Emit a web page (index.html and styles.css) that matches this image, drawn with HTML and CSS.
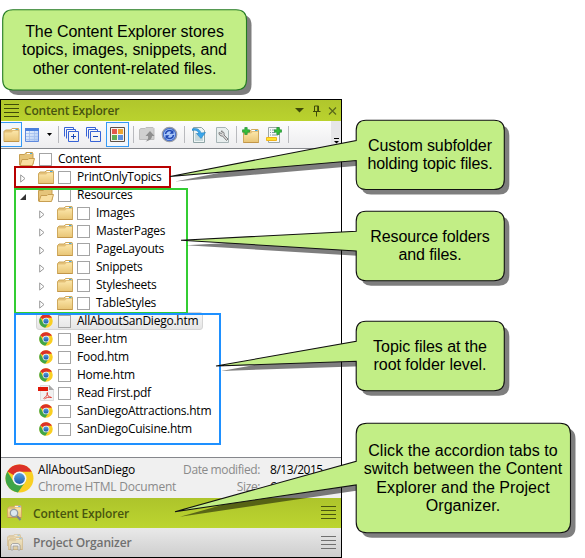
FILE: index.html
```
<!DOCTYPE html>
<html lang="en">
<head>
<meta charset="utf-8">
<title>Content Explorer</title>
<link rel="stylesheet" href="styles.css">
</head>
<body>
<svg class="defs" width="0" height="0" aria-hidden="true">
  <defs>
    <linearGradient id="gold" x1="0" y1="0" x2="0" y2="1"><stop offset="0" stop-color="#fbe5a8"/><stop offset="1" stop-color="#e9c677"/></linearGradient>
    <linearGradient id="blue" x1="0" y1="0" x2="0" y2="1"><stop offset="0" stop-color="#5aa0e0"/><stop offset="1" stop-color="#1c5cab"/></linearGradient>
    <linearGradient id="cells" x1="0" y1="0" x2="1" y2="1"><stop offset="0" stop-color="#f4f9ff"/><stop offset="1" stop-color="#a9c6f2"/></linearGradient>
    <symbol id="folder" viewBox="0 0 16 14">
      <path d="M.5 13.500V3.500L2 2h5l1.500-1.500H15L15.500 2v11.500z" fill="#e3c078" stroke="#cfa95c"/>
      <path d="M8.500 1.500h6" stroke="#fff"/><path d="M12 1.500h2.500" stroke="#45a8dc"/>
      <path d="M1 4.500h7L9.500 3H15v10H1z" fill="url(#gold)"/>
      <path d="M.5 13.500h15" stroke="#c29649"/>
    </symbol>
    <symbol id="folder-open" viewBox="0 0 16 14">
      <path d="M.5 13V2.500h5L7 .5h6.500L14 2v10z" fill="#e5c479" stroke="#c69e50"/>
      <path d="M8 1.500h5" stroke="#fff"/><path d="M11 1.500h2" stroke="#45a8dc"/>
      <path d="M1 13.500L3 7.500H9L10 6.500h5.500l-2 7z" fill="#f9dfa0" stroke="#c89f51"/>
    </symbol>
    <symbol id="chrome" viewBox="0 0 28 28">
      <circle cx="14" cy="14" r="13.500" fill="#f9cf22"/>
      <path d="M14 14L2.300 7.200A13.500 13.500 0 0 1 25.800 7.500H14z" fill="#dc3128"/>
      <path d="M2.300 7.200A13.500 13.500 0 0 0 12.500 27.400L19.700 17.200 14 14 8.300 17.200z" fill="#3fa548"/>
      <circle cx="14" cy="14" r="6.700" fill="#f3f6f8"/>
      <circle cx="14" cy="14" r="5.200" fill="url(#blue)"/>
    </symbol>
    <symbol id="pdf" viewBox="0 0 16 16">
      <path d="M2.500 .5h9l4 4v11h-13z" fill="#f1f1f1" stroke="#ddd"/><path d="M11 0l5 5h-5z" fill="#aaa"/>
      <path d="M0 2h10v4H0z" fill="#e01808"/>
      <path d="M5.500 13.500c2.500-1.500 4.200-3.500 3.800-6-.5 2.500 1 4.500 4.200 5-3-.6-5.500 0-7 1.500" fill="none" stroke="#e0362c" stroke-width=".9"/>
    </symbol>
    <symbol id="closed" viewBox="0 0 6 9"><path d="M.7 .9v7.200L5 4.500z" fill="#fff" stroke="#999"/></symbol>
    <symbol id="opened" viewBox="0 0 6 6"><path d="M6 0v6H0z" fill="#333"/></symbol>
    <symbol id="plus" viewBox="0 0 8 8"><path d="M2.800 .5h2.400v2.300h2.300v2.400H5.200v2.300H2.800V5.200H.5V2.800h2.300z" fill="#35c03b" stroke="#16852a" stroke-width=".6"/></symbol>
    <symbol id="lines" viewBox="0 0 15 14"><path d="M0 .5h15M0 4.500h15M0 8.500h15M0 12.500h15" stroke="currentColor"/></symbol>
  </defs>
</svg>

<main class="panel">
  <header class="title">
    <svg class="grip" width="15" height="14"><use href="#lines"/></svg>
    <h1>Content Explorer</h1>
    <svg class="winbtns" width="42" height="12" viewBox="0 0 42 12">
      <path d="M0 3h9L4.500 7.500z" fill="#3e4a08"/>
      <path d="M19.500 6.500v-5.500h4v5.500M18 6.500h7.500M21.500 7v4.500M22.700 1v5" fill="none" stroke="#3e4a08"/>
      <path d="M34 2.500l7 7M41 2.500l-7 7" stroke="#59671a" stroke-width="1.200"/>
    </svg>
  </header>

  <nav class="toolbar">
    <span class="tool first on"><svg width="17" height="14"><use href="#folder"/></svg></span>
    <span class="tool"><svg width="14" height="14" viewBox="0 0 14 14"><path d="M.5 .5h13v13H.5z" fill="url(#cells)" stroke="#5f8ade"/><path d="M0 0h14v3H0z" fill="#4b7fdc"/><path d="M1 5.500h12M1 8.500h12M1 11.500h12M4.500 3v10M9.500 3v10" stroke="#a3bfee" stroke-width=".8"/></svg></span>
    <span class="tool"><svg width="5" height="3"><path d="M0 0h5L2.500 3z"/></svg></span>
    <i class="sep"></i>
    <span class="tool"><svg width="15" height="15" viewBox="0 0 15 15"><path d="M.5 9.500v-9h9v2M2.500 11.500v-9h9v2M4.500 4.500h10v10h-10z" fill="none" stroke="#3763d6"/><path d="M7 9.500h5M9.500 7v5" stroke="#1846b5"/></svg></span>
    <span class="tool"><svg width="15" height="15" viewBox="0 0 15 15"><path d="M.5 9.500v-9h9v2M2.500 11.500v-9h9v2M4.500 4.500h10v10h-10z" fill="none" stroke="#3763d6"/><path d="M7 9.500h5" stroke="#1846b5"/></svg></span>
    <span class="tool on"><svg width="15" height="15" viewBox="0 0 15 15"><path d="M.5 .5h14v14H.5z" fill="#f6f3ee" stroke="#5d5048"/><path d="M2 2h5v5H2z" fill="#e4574c"/><path d="M8 2h5v5H8z" fill="#eda531"/><path d="M2 8h5v5H2z" fill="#62ad55"/><path d="M8 8h5v5H8z" fill="#5c8fe0"/></svg></span>
    <i class="sep"></i>
    <span class="tool"><svg width="16" height="15" viewBox="0 0 16 15"><path d="M.5 12.500v-10L2 1.500h4l1-1h7l1 1v11z" fill="#d0d0d0" stroke="#bdbdbd"/><path d="M11 4l4.500 5H13c0 3-3 5-6.500 5.500C9 13 9.500 11 9 9H6.500z" fill="#8e8e8e"/></svg></span>
    <span class="tool"><svg width="17" height="17" viewBox="0 0 17 17"><circle cx="8.500" cy="8.500" r="7.200" fill="#3f6cd0" stroke="#9a9da6" stroke-width="1.300"/><circle cx="8.500" cy="8.500" r="5.600" fill="#a9c6f7"/><path d="M4.500 8c.3-3.500 4.500-4.500 6.500-2.500M12.500 9c-.3 3.500-4.500 4.500-6.500 2.500" fill="none" stroke="#1f48b4" stroke-width="1.600"/><path d="M12.500 3.500v4.300H8.500zM4.500 13.500V9.200h4z" fill="#1f48b4"/></svg></span>
    <i class="sep"></i>
    <span class="tool"><svg width="14" height="16" viewBox="0 0 14 16"><path d="M1.500 .5h8l3 3v12h-11z" fill="#eef4f4" stroke="#8fa4a6"/><path d="M3 7h4M3 9h4M3 11h8M3 13h8" stroke="#9dbbc0"/><path d="M0 2c5-1.500 8 .5 9 4l4.500-.5-4.500 6L4.500 6.500H7C6 4 4 2.500 0 3.500z" fill="#3ba6ea" stroke="#1678bd" stroke-width=".5"/></svg></span>
    <span class="tool"><svg width="13" height="16" viewBox="0 0 13 16"><path d="M.5 .5h9l3 3v12H.5z" fill="#e8eeee" stroke="#a7b4b6"/><path d="M3 5.500A3 3 0 0 0 6.500 9l4 4.500 1.500-1.500-4-4A3 3 0 0 0 5 4l1.300 1.600-.8.900z" fill="#d5d5d5" stroke="#777" stroke-width=".9"/></svg></span>
    <i class="sep"></i>
    <span class="tool"><svg width="17" height="16" viewBox="0 0 17 16"><use href="#folder" x="1" y="2" width="16" height="14"/><use href="#plus" width="8" height="8"/></svg></span>
    <span class="tool"><svg width="16" height="16" viewBox="0 0 16 16"><path d="M2.500 .5h11v15h-11z" fill="#f8f9f8" stroke="#9da8a6"/><path d="M4 3h1M6 3h3M4 5.500h1M6 5.500h3M4 8h1M6 8h6" stroke="#8199a0"/><path d="M.5 10.500h10v3H.5z" fill="#ffe52c" stroke="#f0b41c"/><use href="#plus" x="8" width="8" height="8"/></svg></span>
    <i class="sep"></i>
    <span></span>
    <span class="more"><svg width="5" height="6"><path d="M0 0h5v1H0zM0 3h5L2.500 5.500z"/></svg></span>
  </nav>

  <section class="tree">
    <div class="row l0"><span class="exp"></span><svg class="ico"><use href="#folder-open"/></svg><i class="check"></i><span>Content</span></div>
    <div class="row l1"><span class="exp"><svg width="6" height="9"><use href="#closed"/></svg></span><svg class="ico"><use href="#folder"/></svg><i class="check"></i><span>PrintOnlyTopics</span></div>
    <div class="row l1"><span class="exp"><svg width="6" height="6"><use href="#opened"/></svg></span><svg class="ico"><use href="#folder-open"/></svg><i class="check"></i><span>Resources</span></div>
    <div class="row l2"><span class="exp"><svg width="6" height="9"><use href="#closed"/></svg></span><svg class="ico"><use href="#folder"/></svg><i class="check"></i><span>Images</span></div>
    <div class="row l2"><span class="exp"><svg width="6" height="9"><use href="#closed"/></svg></span><svg class="ico"><use href="#folder"/></svg><i class="check"></i><span>MasterPages</span></div>
    <div class="row l2"><span class="exp"><svg width="6" height="9"><use href="#closed"/></svg></span><svg class="ico"><use href="#folder"/></svg><i class="check"></i><span>PageLayouts</span></div>
    <div class="row l2"><span class="exp"><svg width="6" height="9"><use href="#closed"/></svg></span><svg class="ico"><use href="#folder"/></svg><i class="check"></i><span>Snippets</span></div>
    <div class="row l2"><span class="exp"><svg width="6" height="9"><use href="#closed"/></svg></span><svg class="ico"><use href="#folder"/></svg><i class="check"></i><span>Stylesheets</span></div>
    <div class="row l2"><span class="exp"><svg width="6" height="9"><use href="#closed"/></svg></span><svg class="ico"><use href="#folder"/></svg><i class="check"></i><span>TableStyles</span></div>
    <div class="row l1"><span class="exp"></span><div class="selected"><svg class="ico file"><use href="#chrome"/></svg><i class="check"></i><span>AllAboutSanDiego.htm</span></div></div>
    <div class="row l1"><span class="exp"></span><svg class="ico file"><use href="#chrome"/></svg><i class="check"></i><span>Beer.htm</span></div>
    <div class="row l1"><span class="exp"></span><svg class="ico file"><use href="#chrome"/></svg><i class="check"></i><span>Food.htm</span></div>
    <div class="row l1"><span class="exp"></span><svg class="ico file"><use href="#chrome"/></svg><i class="check"></i><span>Home.htm</span></div>
    <div class="row l1"><span class="exp"></span><svg class="ico pdf"><use href="#pdf"/></svg><i class="check"></i><span>Read First.pdf</span></div>
    <div class="row l1"><span class="exp"></span><svg class="ico file"><use href="#chrome"/></svg><i class="check"></i><span>SanDiegoAttractions.htm</span></div>
    <div class="row l1"><span class="exp"></span><svg class="ico file"><use href="#chrome"/></svg><i class="check"></i><span>SanDiegoCuisine.htm</span></div>
  </section>

  <section class="details">
    <svg width="29" height="29"><use href="#chrome"/></svg>
    <div class="who"><b>AllAboutSanDiego</b><span>Chrome HTML Document</span></div>
    <div class="keys"><span>Date modified:</span><span>Size:</span></div>
    <div class="vals"><span>8/13/2015</span><span>6</span></div>
  </section>

  <div class="tab active">
    <svg width="16" height="17" viewBox="0 0 16 17"><use href="#folder" width="15" height="13"/><circle cx="7" cy="8" r="3.700" fill="#dce8f0" stroke="#909aa5" stroke-width="1.300"/><path d="M10 11l3.500 4" stroke="#79808c" stroke-width="2"/></svg>
    <span>Content Explorer</span>
    <svg class="menu" width="15" height="14"><use href="#lines"/></svg>
  </div>
  <div class="tab idle">
    <svg width="16" height="17" viewBox="0 0 16 17"><g opacity=".55"><use href="#folder" width="14" height="12"/><use href="#folder" x="1" y="3" width="15" height="13"/></g><path d="M4 16v-5l1.500-1.500h5.500l2 1.500v5h-2v-4H6v4z" fill="#eee" stroke="#999" stroke-width=".8"/></svg>
    <span>Project Organizer</span>
    <svg class="menu" width="15" height="14"><use href="#lines"/></svg>
  </div>
</main>

<div class="mark red"></div>
<div class="mark green"></div>
<div class="mark blue"></div>

<svg class="balloons" width="585" height="558" viewBox="0 0 585 558">
  <defs>
    <path id="b1" d="M13 9.800H236Q246.500 9.800 246.500 20.300V79.500Q246.500 90 236 90H13Q2.700 90 2.700 79.500V20.300Q2.700 9.800 13 9.800Z"/>
    <path id="b2" d="M366 120.300H494Q504.300 120.300 504.300 130.500V179.500Q504.300 189.500 494 189.500H366Q356.200 189.500 356.200 179.500V160.500L170 176.500 356.200 140.500V130.500Q356.200 120.300 366 120.300Z"/>
    <path id="b3" d="M366 211.300H494Q504.300 211.300 504.300 221.500V270.500Q504.300 280.700 494 280.700H366Q356.200 280.700 356.200 270.500V251L181 240.200 356.200 231.200V221.500Q356.200 211.300 366 211.300Z"/>
    <path id="b4" d="M366 321.300H494Q504.300 321.300 504.300 331.500V380.500Q504.300 390.700 494 390.700H366Q356.200 390.700 356.200 380.500V361.200L216 366 356.200 341.300V331.500Q356.200 321.300 366 321.300Z"/>
    <path id="b5" d="M367 423.300H560Q570.500 423.300 570.500 434V522Q570.500 532.700 560 532.700H367Q356.200 532.700 356.200 522V485L175 511.700 356.200 461.300V434Q356.200 423.300 367 423.300Z"/>
  </defs>
  <g fill="#000" opacity=".5" transform="translate(5 5)"><use href="#b1"/><use href="#b2"/><use href="#b3"/><use href="#b4"/><use href="#b5"/></g>
  <g fill="#c2ee86" stroke="#111" stroke-width="1.100"><use href="#b1" stroke="#237a23"/><use href="#b2"/><use href="#b3"/><use href="#b4"/><use href="#b5"/></g>
</svg>

<p class="note n1">The Content Explorer stores<br>topics, images, snippets, and<br>other content-related files.</p>
<p class="note n2">Custom subfolder<br>holding topic files.</p>
<p class="note n3">Resource folders<br>and files.</p>
<p class="note n4">Topic files at the<br>root folder level.</p>
<p class="note n5">Click the accordion tabs to<br>switch between the Content<br>Explorer and the Project<br>Organizer.</p>
</body>
</html>
```
FILE: styles.css
```
* { box-sizing: border-box; }
body {
  margin: 0;
  padding-top: 99px;
  width: 585px;
  height: 558px;
  overflow: hidden;
  position: relative;
  background: #fff;
  font: 12px/18px "Open Sans", "Noto Sans", sans-serif;
  color: #000;
}
svg { display: block; flex: none; }
.defs { position: absolute; }

.panel {
  width: 342px;
  height: 459px;
  border: 1px solid #000;
  display: flex;
  flex-direction: column;
  background: #fff;
}
.title {
  height: 21px;
  flex: none;
  display: flex;
  align-items: center;
  padding: 0 4px 0 3px;
  background: linear-gradient(#b0c62c, #bad22e);
  color: #3e4a08;
}
.title h1 {
  margin: 0 auto 0 5px;
  font-size: 12px;
  font-weight: 600;
  letter-spacing: -.2px;
  color: #48550f;
}

.toolbar {
  height: 28px;
  flex: none;
  display: grid;
  grid-template-columns: 21px 20px 14px 5px 21px 23px 25px 7px 19px 26px 5px 24px 22px 6px 23px 23px 6px 1fr 10px;
  background: linear-gradient(#fdfdfd, #ededef);
  border-bottom: 1px solid #85878c;
}
.tool { display: flex; align-items: center; justify-content: center; }
.tool.on { border: 1px solid #3399f5; background: #f1f6fc; margin: 1px; height: 25px; }
.tool.first { margin-left: 0; margin-right: 0; border-left: 0; }
.sep { width: 1px; height: 17px; background: #b9babe; place-self: center; }
.more { display: flex; align-items: flex-end; justify-content: center; padding-bottom: 4px; background: #e6e6e8; }

.tree { height: 308px; flex: none; padding-top: 1px; }
.row { height: 18px; display: flex; align-items: center; white-space: nowrap; }
.row > span, .selected > span { letter-spacing: -.24px; }
.l1 { padding-left: 19px; }
.l2 { padding-left: 38px; }
.exp { width: 18px; height: 18px; flex: none; display: flex; align-items: center; padding-top: 3px; }
.ico { width: 16px; height: 14px; margin-right: 4px; }
.file { width: 14px; height: 14px; margin-left: 1px; margin-right: 5px; }
.pdf { height: 16px; }
.check { width: 13px; height: 13px; flex: none; border: 1px solid #a4a4a4; margin: 1px 6px 0 0; }
.selected {
  display: flex;
  align-items: center;
  height: 18px;
  width: 167px;
  margin-left: -2px;
  padding-left: 1px;
  border: 1px solid #d5d5d5;
  border-radius: 3px;
  background: linear-gradient(#f8f8f8, #e5e5e5);
}

.details {
  height: 41px;
  flex: none;
  display: flex;
  align-items: center;
  border-top: 1px solid #85878c;
  background: #f0f0f0;
  padding-left: 4px;
  color: #8a8a8a;
  line-height: 17px;
  white-space: nowrap;
}
.details > div { display: flex; flex-direction: column; margin-top: -1px; }
.who { margin-left: 4px; width: 145px; letter-spacing: -.2px; }
.who b, .vals { color: #000; font-weight: 400; }
.keys { width: 77px; align-items: flex-end; letter-spacing: -.4px; }
.vals { margin-left: 10px; letter-spacing: -.45px; }

.tab {
  height: 30px;
  flex: none;
  display: flex;
  align-items: center;
  padding: 0 5px 0 6px;
  font-weight: 600;
  letter-spacing: -.15px;
}
.tab span { margin: 0 auto 0 10px; padding-top: 1px; }
.active { background: linear-gradient(#adc42b, #bcd530); color: #48550f; }
.idle { height: 29px; background: linear-gradient(#e9e9e9, #cecece); color: #707070; }

.mark { position: absolute; border: 2px solid; left: 14px; }
.red { top: 166px; width: 157px; height: 22px; border-color: #b80000; }
.green { top: 188px; width: 174px; height: 126px; border-color: #32cd32; }
.blue { top: 313px; width: 207px; height: 132px; border-color: #1e90ff; }
.balloons { position: absolute; left: 0; top: 0; }

.note {
  position: absolute;
  margin: 0;
  font: 16px/18.300px "Liberation Sans", sans-serif;
  text-align: center;
  white-space: nowrap;
  letter-spacing: -.05px;
}
.n1 { left: 3px; top: 23px; width: 243px; }
.n2 { left: 356px; top: 137px; width: 148px; letter-spacing: -.1px; }
.n3 { left: 356px; top: 228px; width: 148px; letter-spacing: -.1px; }
.n4 { left: 356px; top: 338px; width: 148px; }
.n5 { left: 356px; top: 442px; width: 214px; letter-spacing: .07px; }
```
